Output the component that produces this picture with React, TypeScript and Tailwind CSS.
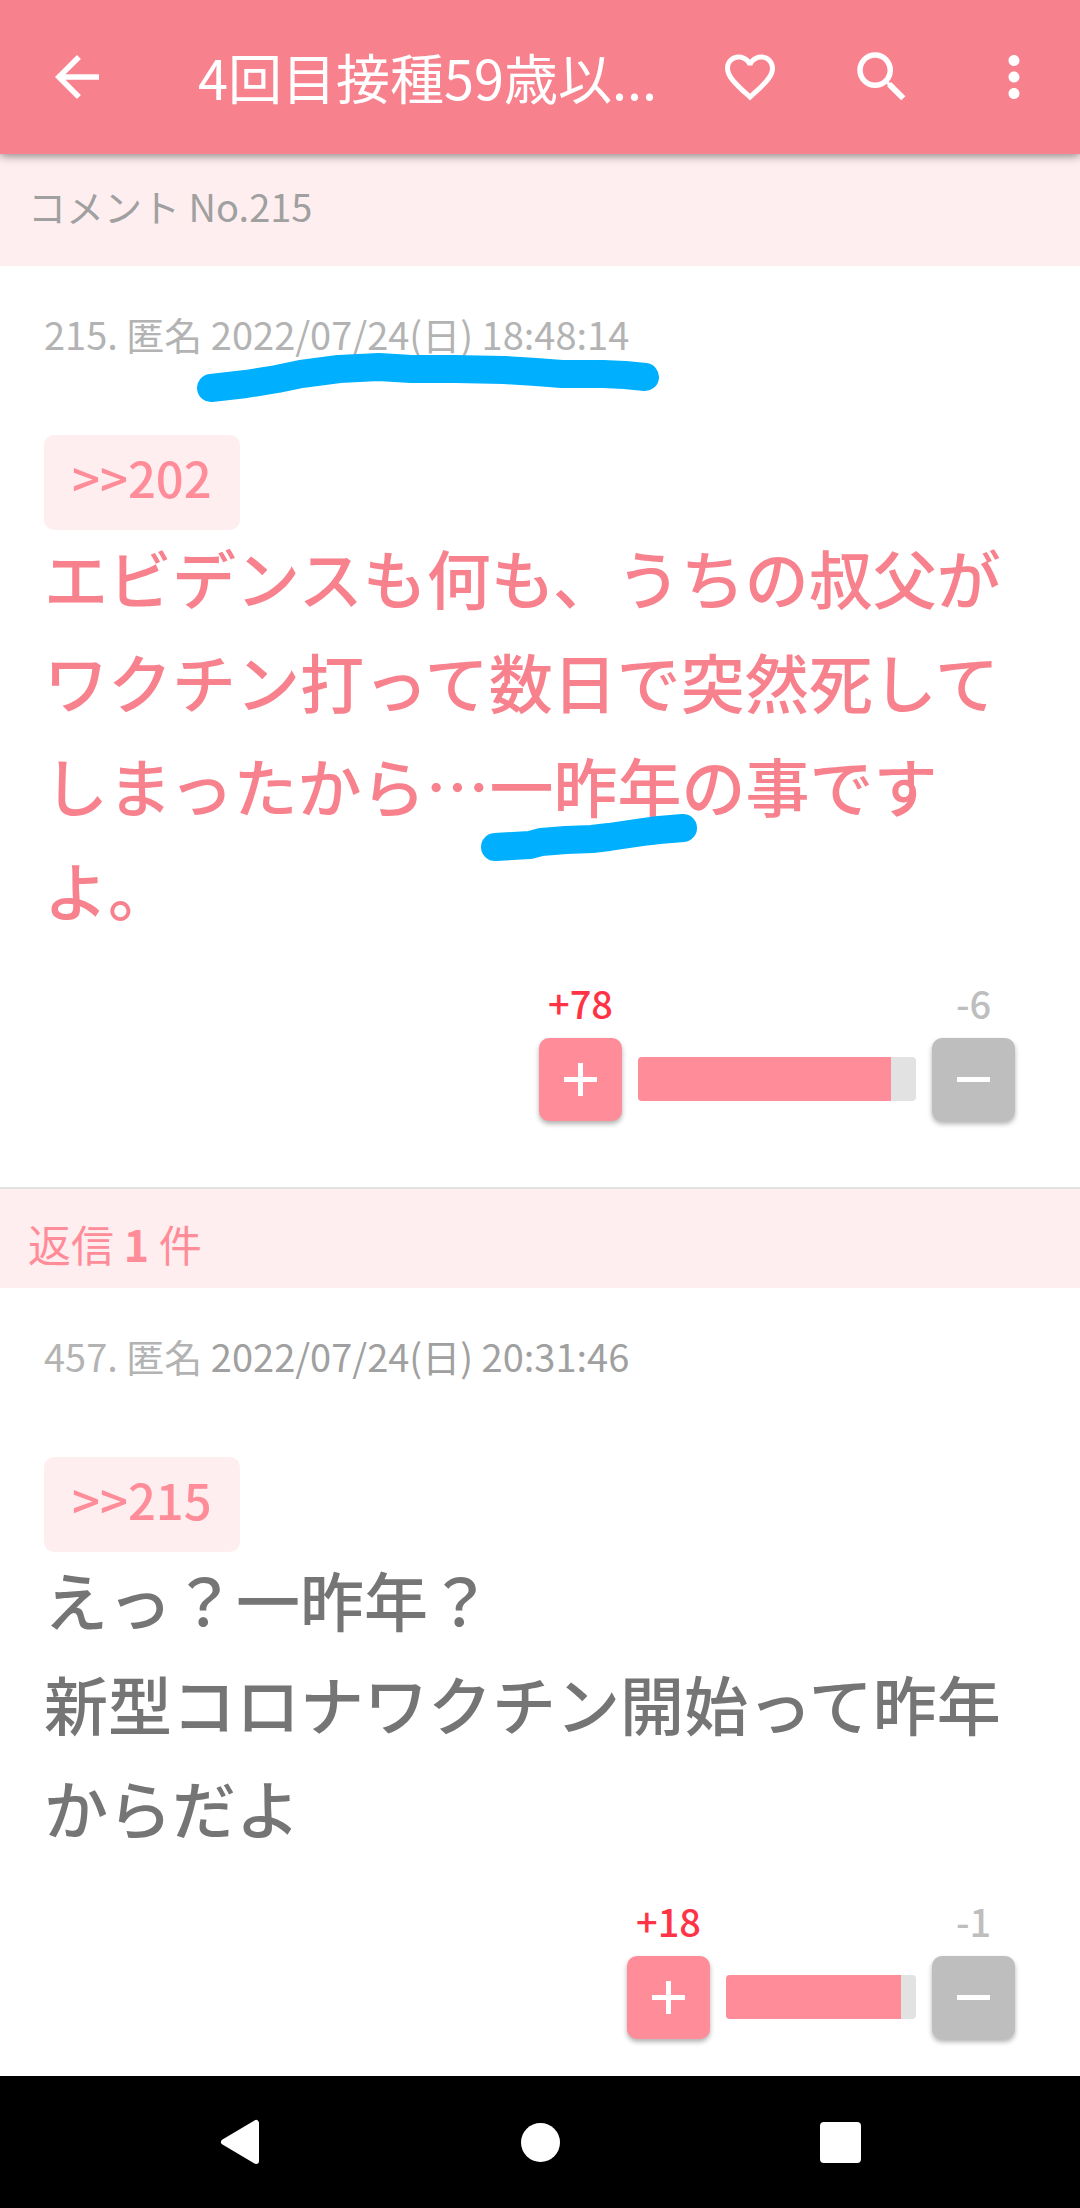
import React from 'react';
import { MdArrowBack, MdFavoriteBorder, MdMoreVert, MdSearch } from 'react-icons/md';

type VoteBarProps = {
  plus: number;
  minus: number;
  barClass: string;
};

const VoteBar: React.FC<VoteBarProps> = ({ plus, minus, barClass }) => {
  const ratio = (plus / (plus + minus)) * 100;

  return (
    <div className="flex justify-end items-end gap-4 pr-[21px] pt-9">
      <div className="flex flex-col items-center w-[83px]">
        <span className="text-[38px] leading-[54px] h-[62px] font-medium text-[#ff3346]">+{plus}</span>
        <button aria-label="プラス" className="w-full h-[83px] rounded-[10px] bg-[#ff8c99] shadow-[0_3px_5px_rgba(0,0,0,0.3)] flex items-center justify-center">
          <svg viewBox="0 0 33 33" className="w-[33px] h-[33px]" fill="#fff">
            <path d="M14 0h5v14h14v5H19v14h-5V19H0v-5h14z" />
          </svg>
        </button>
      </div>

      <div className={`${barClass} h-11 mb-5 rounded-[4px] overflow-hidden bg-[#e2e2e2]`}>
        <div className="h-full bg-[#ff8c99]" style={{ width: `calc(${ratio}% - 5px)` }} />
      </div>

      <div className="flex flex-col items-center w-[83px]">
        <span className="text-[38px] leading-[54px] h-[62px] font-medium text-[#bebebe]">-{minus}</span>
        <button aria-label="マイナス" className="w-full h-[83px] rounded-[10px] bg-[#bebebe] shadow-[0_3px_5px_rgba(0,0,0,0.3)] flex items-center justify-center">
          <svg viewBox="0 0 33 33" className="w-[33px] h-[33px]" fill="#fff">
            <path d="M0 14h33v5H0z" />
          </svg>
        </button>
      </div>
    </div>
  );
};

const ReplyChip: React.FC<{ to: number }> = ({ to }) => (
  <a href={`#comment-${to}`} className="block w-fit h-[95px] px-[28px] rounded-[10px] bg-[#ffeeef] text-[#ff8c99] text-[49px] leading-[84px] font-medium">
    &gt;&gt;{to}
  </a>
);

export default function App() {
  return (
    <div
      lang="ja"
      className="min-h-screen flex flex-col bg-white font-['Noto_Sans_CJK_JP',sans-serif]"
    >
      {/* Barra superior */}
      <header className="relative z-10 h-[154px] pl-[44px] pr-[33px] flex items-center gap-[66px] bg-[#f7828e] text-white shadow-[0_2px_9px_rgba(0,0,0,0.45)]">
        <button aria-label="戻る"><MdArrowBack className="w-[66px] h-[66px]" /></button>
        <h1 className="flex-1 min-w-0 ml-[22px] text-[54px] leading-[80px] whitespace-nowrap">4回目接種59歳以...</h1>
        <button aria-label="お気に入り" className="w-[66px] flex justify-center"><MdFavoriteBorder className="w-[60px] h-[60px]" /></button>
        <button aria-label="検索"><MdSearch className="w-[66px] h-[66px]" /></button>
        <button aria-label="メニュー"><MdMoreVert className="w-[66px] h-[66px]" /></button>
      </header>

      <main className="flex-1">
        <h2 className="h-[112px] px-7 bg-[#ffeeef] text-[38px] leading-[104px] text-[#a0a0a0]">コメント No.215</h2>

        <article id="comment-215" className="relative px-[44px] pt-10 pb-[66px]">
          <p className="text-[38px] leading-[56px] text-[#b3b3b3]">215. 匿名 2022/07/24(日) 18:48:14</p>
          <div className="pt-[73px]">
            <ReplyChip to={202} />
            <p className="-mt-1.5 text-[64px] leading-[104px] font-medium text-[#f7828e]">
              エビデンスも何も、うちの叔父がワクチン打って数日で突然死してしまったから…一昨年の事ですよ。
            </p>
          </div>
          <VoteBar plus={78} minus={6} barClass="w-[278px]" />

          {/* Riscos de marcador */}
          <svg viewBox="197 350 464 60" className="absolute left-[197px] top-[84px] w-[464px] h-[60px] pointer-events-none" fill="none" stroke="#00b0ff" strokeWidth="28" strokeLinecap="round" strokeLinejoin="round">
            <path d="M211 388L246 384L277 379L301 374L339 369L379 367L411 369L455 369L504 370L536 372L562 374L603 374L625 375L645 377" />
          </svg>
          <svg viewBox="480 812 220 52" className="absolute left-[480px] top-[546px] w-[220px] h-[52px] pointer-events-none" fill="none" stroke="#00b0ff" strokeWidth="28" strokeLinecap="round" strokeLinejoin="round">
            <path d="M495 847L530 845L541 842L566 840L592 839L609 837L643 832L659 830L683 828" />
          </svg>
        </article>

        <h2 className="h-[101px] px-7 border-t-2 border-[#e2e2e2] bg-[#ffeeef] text-[43px] leading-[108px] text-[#ff8c99]">
          返信 <span className="font-bold">1</span> 件
        </h2>

        <article id="comment-457" className="px-[44px] pt-10 pb-[37px]">
          <p className="text-[38px] leading-[56px] text-[#b3b3b3]">
            457. 匿名 <time className="text-[#a0a0a0]">2022/07/24(日) 20:31:46</time>
          </p>
          <div className="pt-[73px]">
            <ReplyChip to={215} />
            <p className="-mt-1.5 text-[64px] leading-[104px] font-medium text-[#757575]">
              えっ？一昨年？<br />
              新型コロナワクチン開始って昨年からだよ
            </p>
          </div>
          <VoteBar plus={18} minus={1} barClass="w-[190px]" />
        </article>
      </main>

      {/* Navegação do sistema */}
      <nav className="h-[132px] px-[90px] flex items-center bg-black">
        <button aria-label="戻る" className="flex-1 flex justify-center">
          <svg viewBox="0 0 40 46" className="w-[40px] h-[46px]" fill="#fff" stroke="#fff" strokeWidth="6" strokeLinejoin="round">
            <path d="M36 4v38L4 23z" />
          </svg>
        </button>
        <button aria-label="ホーム" className="flex-1 flex justify-center">
          <span className="w-[39px] h-[39px] rounded-full bg-white" />
        </button>
        <button aria-label="履歴" className="flex-1 flex justify-center">
          <span className="w-[41px] h-[41px] rounded-[4px] bg-white" />
        </button>
      </nav>
    </div>
  );
}
